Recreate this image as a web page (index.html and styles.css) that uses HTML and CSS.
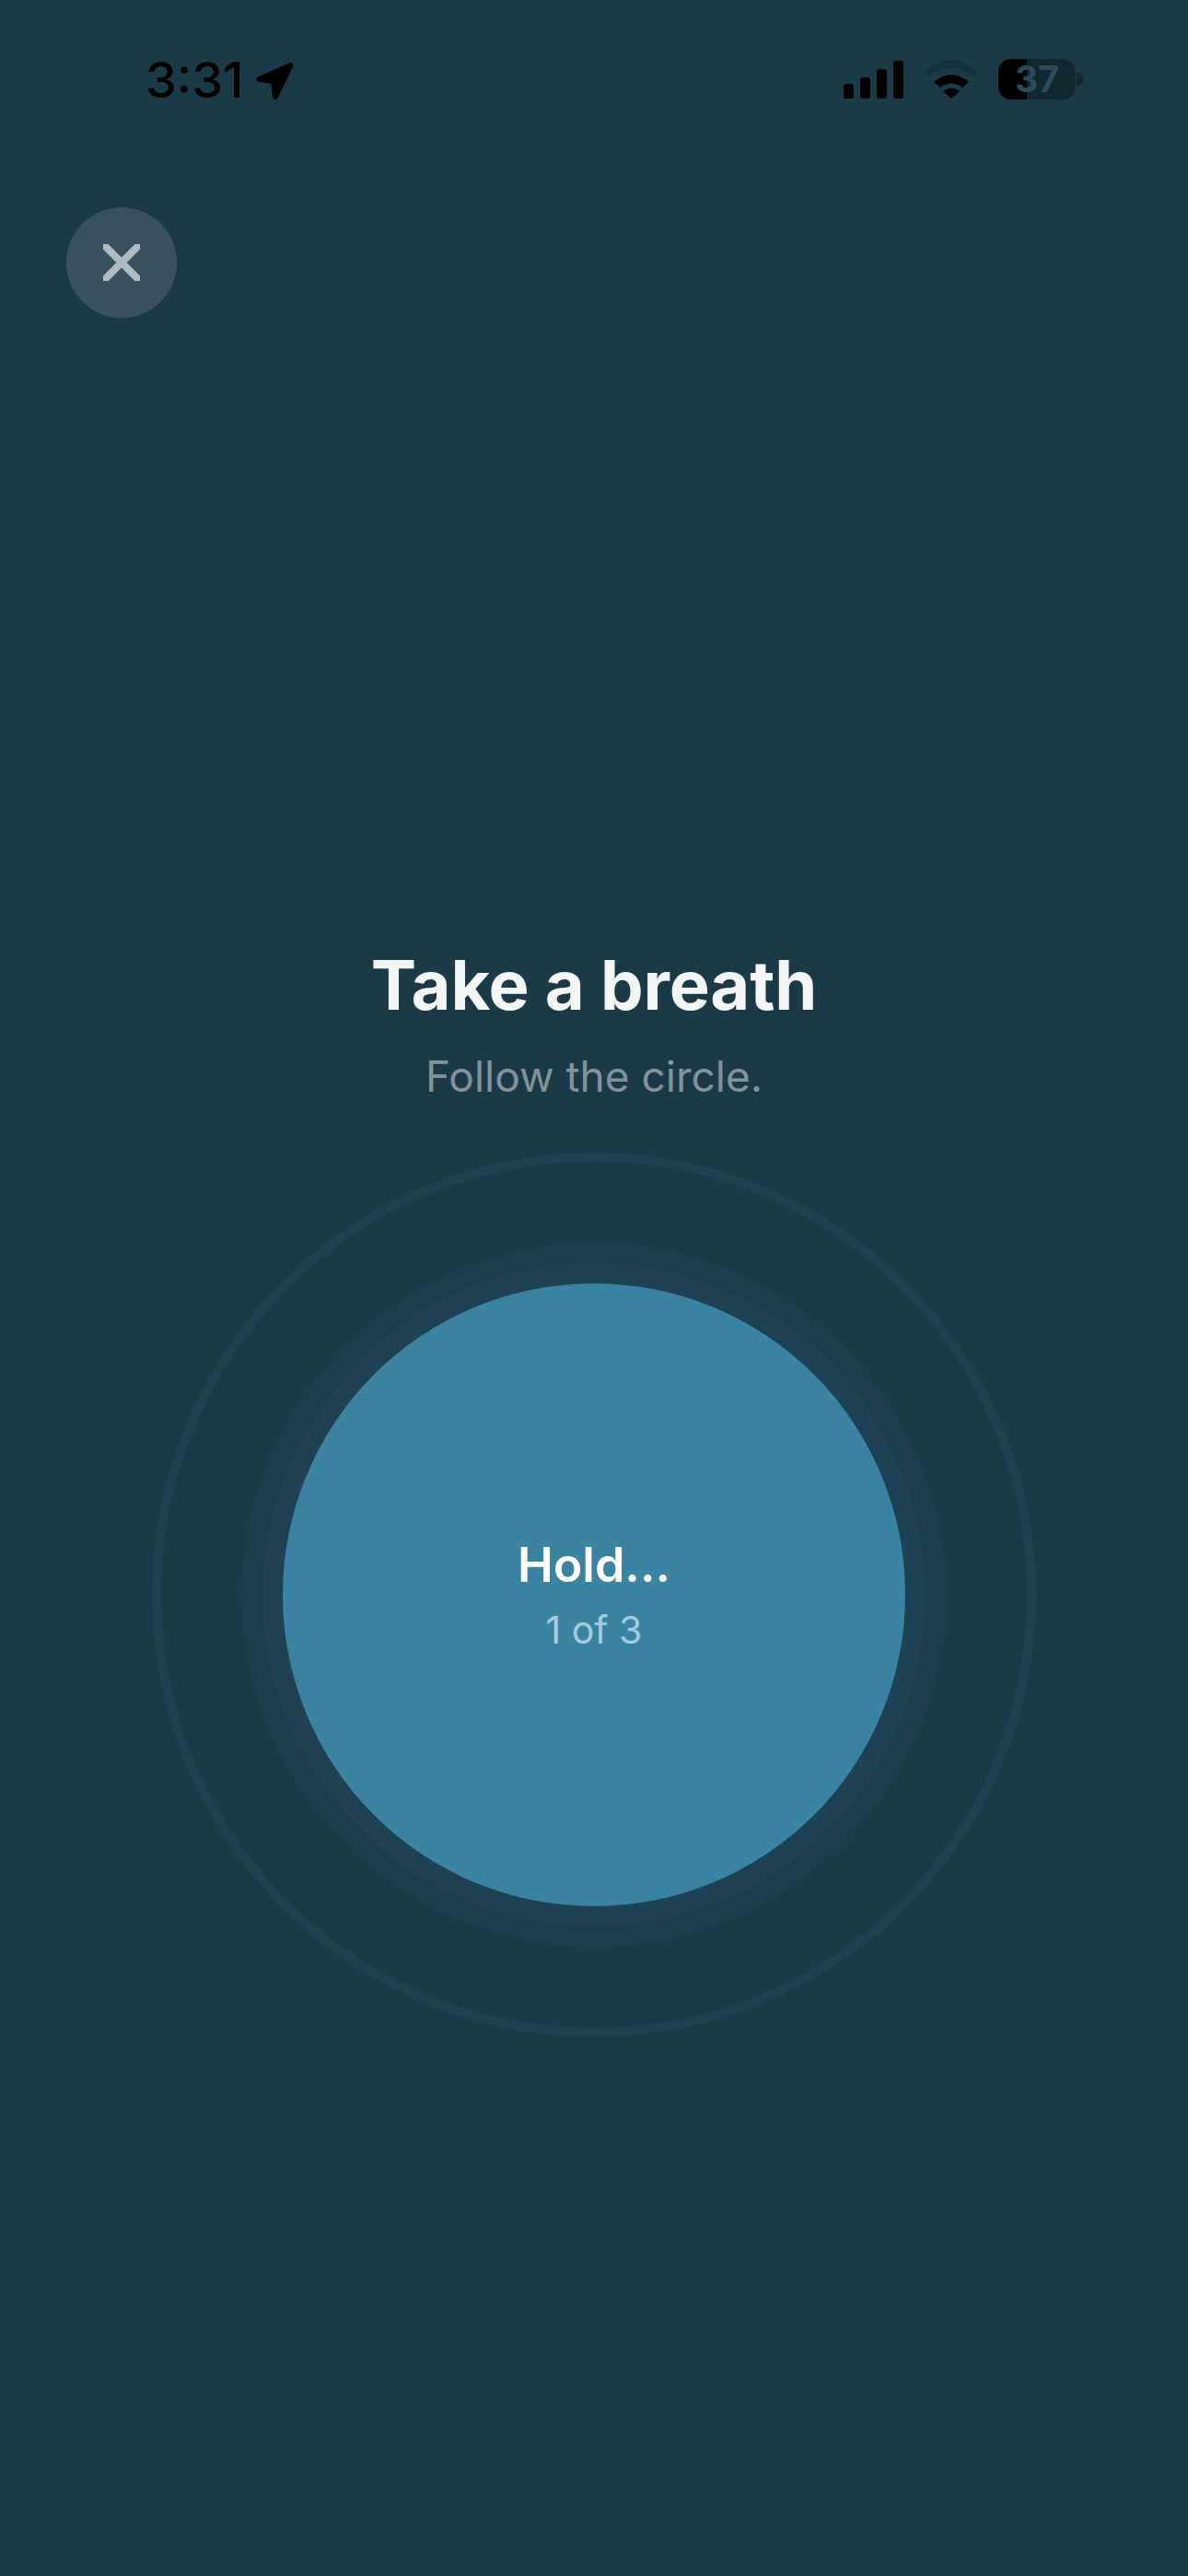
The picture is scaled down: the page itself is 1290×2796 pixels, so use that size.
FILE: index.html
```html
<!DOCTYPE html>
<html lang="en">
<head>
<meta charset="utf-8">
<title>Take a breath</title>
<link rel="stylesheet" href="styles.css">
</head>
<body>
<div class="screen">
  <header class="status">
    <div class="status-left">
      <span class="time">3:31</span>
      <svg class="loc" viewBox="0 0 41 40" aria-hidden="true"><path d="M3.5 18 37.5 3 21 37 19 20Z" fill="#000" stroke="#000" stroke-width="6" stroke-linejoin="round"/></svg>
    </div>
    <div class="status-right">
      <div class="signal"><i class="bar b1"></i><i class="bar b2"></i><i class="bar b3"></i><i class="bar b4"></i></div>
      <svg class="wifi" viewBox="0 0 58 42" aria-hidden="true">
        <path d="M0 13Q29-13 58 13L53 18Q29-1 5 18Z" fill="#14303d"/>
        <path d="M10 24Q29 8 48 24L41 30Q29 21 17 30Z" fill="#000"/>
        <path d="M20 34Q29 27 38 34L29 42Z" fill="#000"/>
      </svg>
      <div class="battery">
        <div class="batt-body"><div class="batt-fill"></div><span class="batt-num">37</span></div>
        <div class="batt-tip"></div>
      </div>
    </div>
  </header>

  <button class="close" aria-label="Close">
    <svg class="close-x" viewBox="0 0 40 40" aria-hidden="true"><path d="M3 3 37 37M37 3 3 37" stroke="#aebbc2" stroke-width="8" stroke-linecap="round" fill="none"/></svg>
  </button>

  <main class="main">
    <h1 class="title">Take a breath</h1>
    <p class="subtitle">Follow the circle.</p>
    <div class="ring-outer">
      <div class="ring-mid">
        <div class="ring-inner">
          <div class="core">
            <span class="phase">Hold...</span>
            <span class="count">1 of 3</span>
          </div>
        </div>
      </div>
    </div>
  </main>
</div>
</body>
</html>
```
FILE: styles.css
```css
* { box-sizing: border-box; }
html, body { margin: 0; padding: 0; }
body { background: #1b3a48; font-family: Inter, "Liberation Sans", sans-serif; }
.screen { width: 1290px; height: 2796px; display: flex; flex-direction: column; background: #1b3a48; overflow: hidden; }

.status { height: 174px; padding: 64px 113px 0 158px; display: flex; justify-content: space-between; align-items: flex-start; }
.status-left { display: flex; align-items: flex-start; }
.time { font-size: 54px; line-height: 46px; font-weight: 500; color: #000; height: 46px; }
.loc { width: 41px; height: 40px; margin: 4px 0 0 13px; }
.status-right { display: flex; align-items: flex-start; }
.signal { display: flex; align-items: flex-end; gap: 7px; height: 41px; margin-top: 2px; }
.bar { display: block; width: 11px; background: #000; border-radius: 3px; }
.b1 { height: 16px; }
.b2 { height: 23px; }
.b3 { height: 32px; }
.b4 { height: 41px; }
.wifi { width: 58px; height: 42px; margin: 1px 0 0 23px; }
.battery { display: flex; align-items: center; margin-left: 22px; }
.batt-body { position: relative; width: 84px; height: 44px; border-radius: 14px; background: #11272f; display: flex; align-items: center; justify-content: center; }
.batt-fill { position: absolute; left: 0; top: 0; bottom: 0; width: 31px; background: #000; border-radius: 14px 0 0 14px; }
.batt-num { position: relative; font-size: 39px; line-height: 44px; font-weight: 700; color: #2b4c5f; }
.batt-tip { width: 8px; height: 14px; margin-left: 1px; background: #11272f; border-radius: 0 7px 7px 0; }

.close { width: 120px; height: 120px; margin: 51px 0 0 72px; padding: 0; border: 0; border-radius: 50%; background: #37525e; display: flex; align-items: center; justify-content: center; flex: none; }
.close-x { width: 40px; height: 40px; }

.main { display: flex; flex-direction: column; align-items: center; padding-top: 680px; }
.title { margin: 0; font-size: 74px; line-height: 88px; font-weight: 700; letter-spacing: -0.15px; color: #f4f6f6; }
.subtitle { margin: 27px 0 0; font-size: 46px; line-height: 56px; font-weight: 400; color: #81939c; }
.ring-outer { width: 960px; height: 960px; margin-top: 55px; border: 10px solid #1d4151; border-radius: 50%; display: flex; align-items: center; justify-content: center; }
.ring-mid { width: 766px; height: 766px; border-radius: 50%; background: #1b3d4e; display: flex; align-items: center; justify-content: center; }
.ring-inner { width: 720px; height: 720px; border-radius: 50%; background: #1e4253; display: flex; align-items: center; justify-content: center; }
.core { width: 676px; height: 676px; border-radius: 50%; background: #3a84a1; display: flex; flex-direction: column; align-items: center; justify-content: center; }
.phase { font-size: 52px; line-height: 64px; font-weight: 600; color: #fff; }
.count { font-size: 41px; line-height: 52px; font-weight: 400; color: #a5cbda; margin-top: 12px; }
```
